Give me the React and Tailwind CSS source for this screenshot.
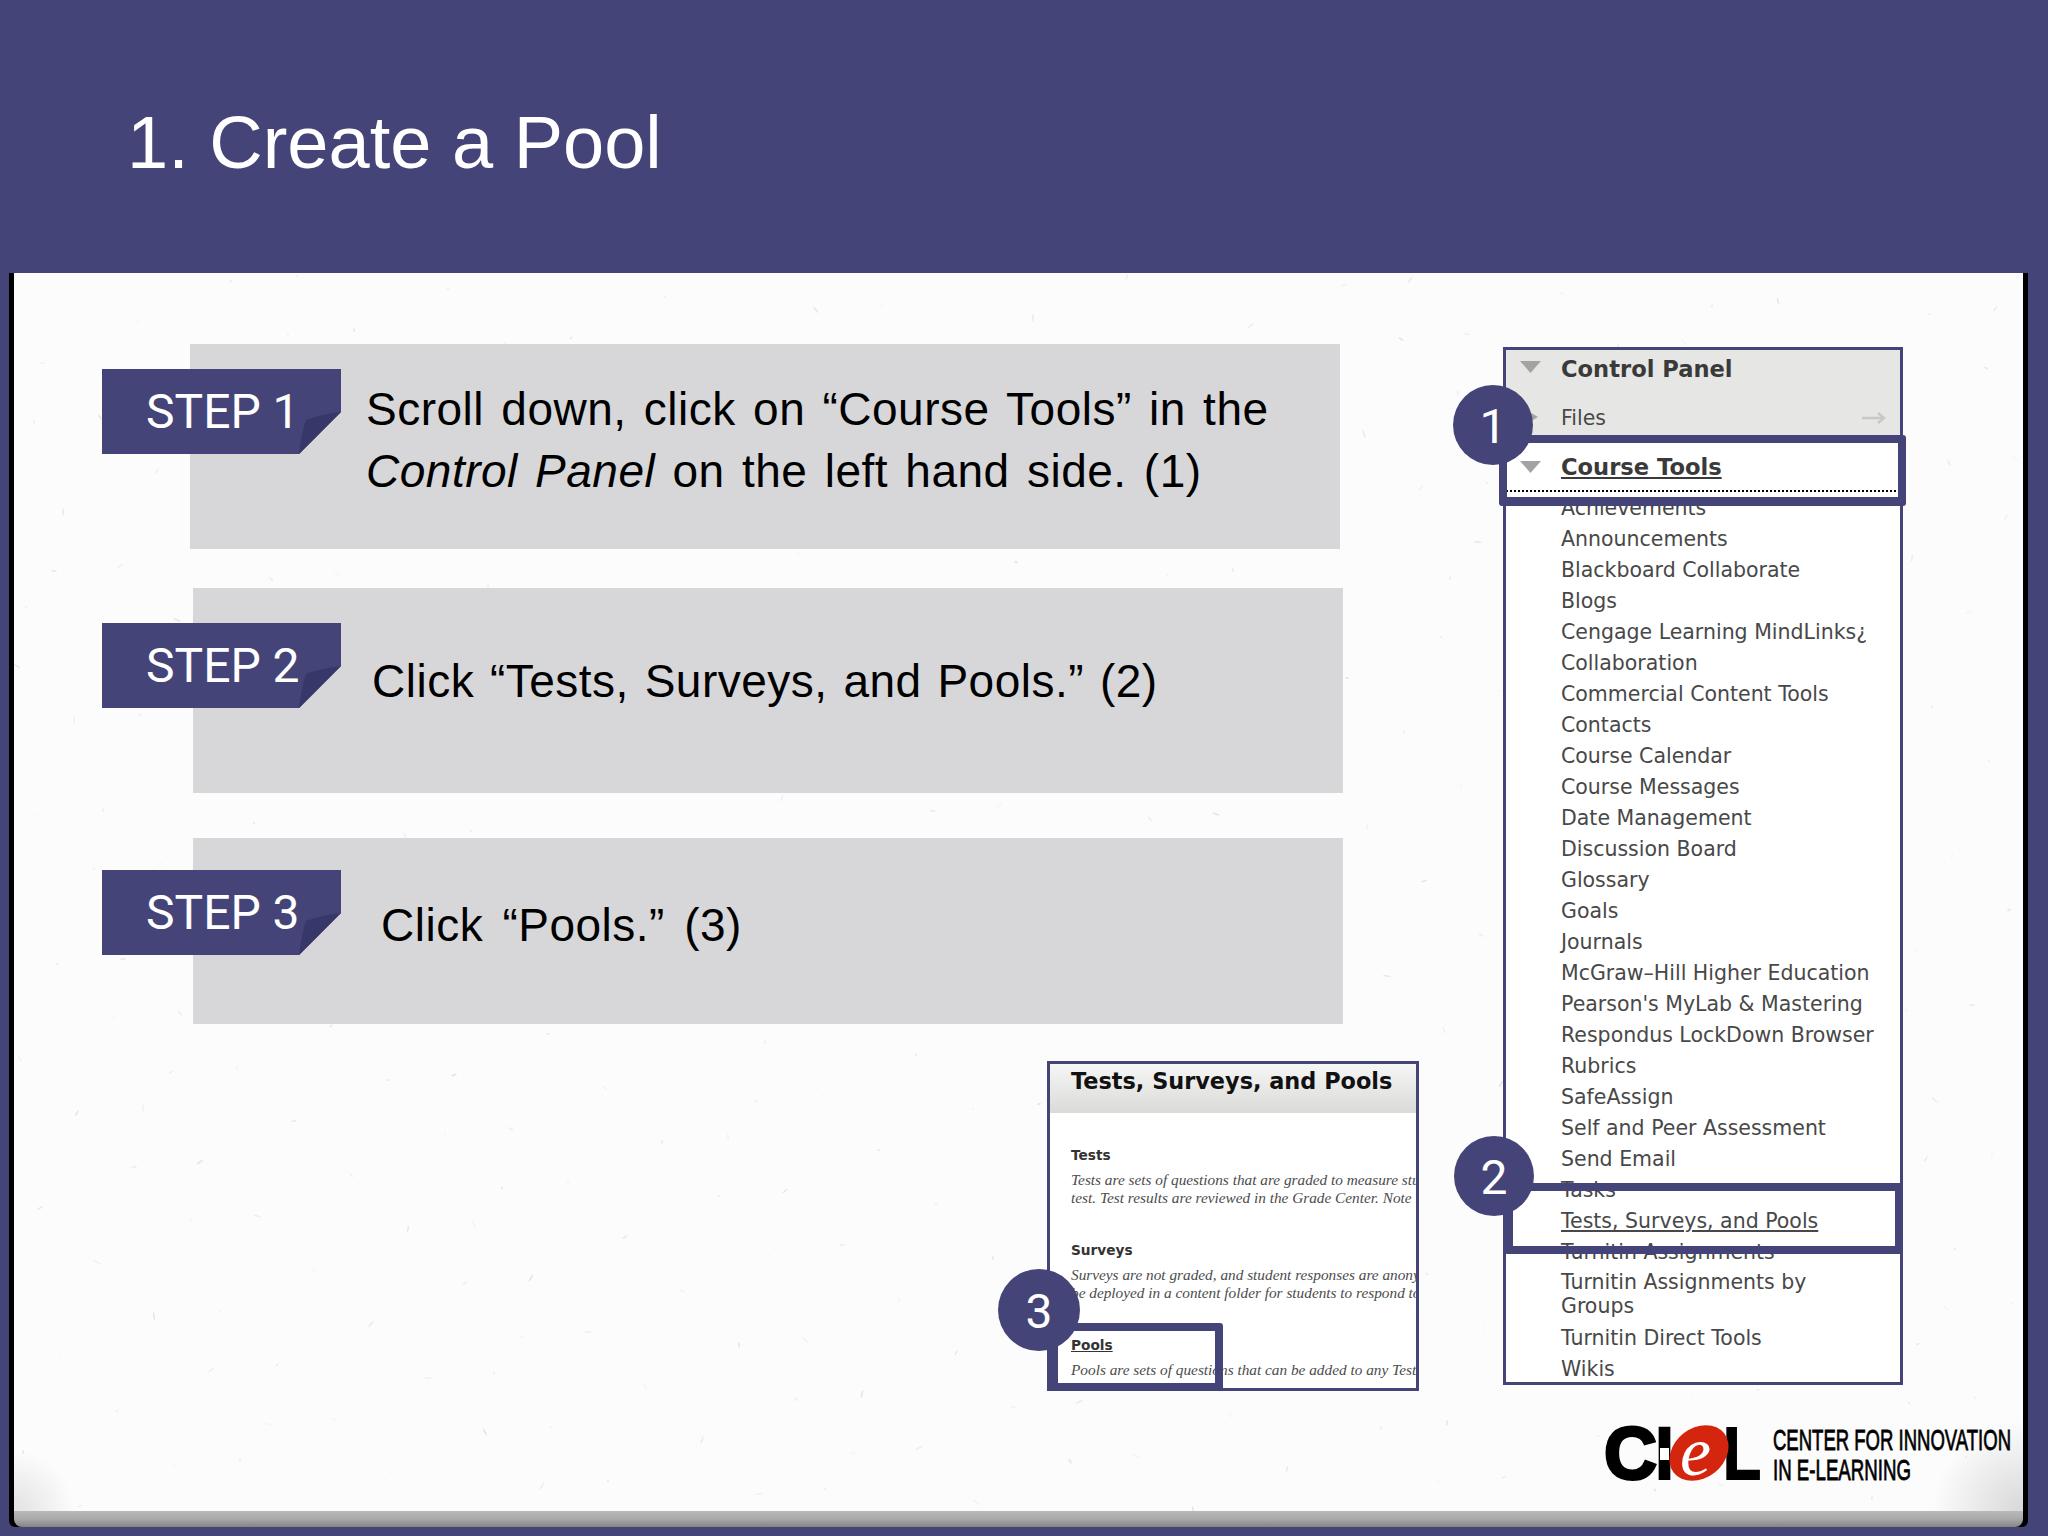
const tools = [
  "Achievements",
  "Announcements",
  "Blackboard Collaborate",
  "Blogs",
  "Cengage Learning MindLinks¿",
  "Collaboration",
  "Commercial Content Tools",
  "Contacts",
  "Course Calendar",
  "Course Messages",
  "Date Management",
  "Discussion Board",
  "Glossary",
  "Goals",
  "Journals",
  "McGraw–Hill Higher Education",
  "Pearson's MyLab & Mastering",
  "Respondus LockDown Browser",
  "Rubrics",
  "SafeAssign",
  "Self and Peer Assessment",
  "Send Email",
  "Tasks",
];

const specks = Array.from({ length: 420 }, (_, i) => {
  const a = (i * 7919) % 2009;
  const b = (i * 104729) % 1238;
  return { x: a, y: b, r: (i * 37) % 180, w: 1 + (i % 4), o: 0.04 + ((i % 5) * 0.025) };
});

const Paper = () => (
  <svg className="absolute inset-0 w-full h-full pointer-events-none" viewBox="0 0 2009 1238">
    {specks.map((s, i) => (
      <ellipse
        key={i}
        cx={s.x}
        cy={s.y}
        rx={s.w}
        ry="0.8"
        fill="#555"
        opacity={s.o}
        transform={`rotate(${s.r} ${s.x} ${s.y})`}
      />
    ))}
  </svg>
);

const Badge = ({ top, children }) => (
  <div className={`absolute left-[-88px] w-[239px] h-[85px] ${top}`}>
    <div className="w-full h-full bg-[#454478] [clip-path:polygon(0_0,100%_0,100%_50.5%,82.5%_100%,0_100%)] pl-[44px] text-white text-[48px] leading-[85px] tracking-normal [word-spacing:0] font-['Roboto',sans-serif] font-normal">
      {children}
    </div>
    <svg className="absolute left-0 top-0" width="239" height="85" viewBox="0 0 239 85">
      <path d="M197 85 Q200 62 204 51 Q220 45 239 43 Z" fill="#37376a" />
    </svg>
  </div>
);

const Circle = ({ pos, children }) => (
  <div className={`absolute rounded-full bg-[#454478] text-white text-[48px] font-['Roboto',sans-serif] font-normal pt-[4px] flex items-center justify-center ${pos}`}>
    {children}
  </div>
);

const Section = ({ title, link, lines }) => (
  <div className="pl-[21px] pt-[33px] h-[95px] whitespace-nowrap">
    <div className={`h-[18px] leading-[18px] text-[13.7px] font-bold text-[#333] font-['DejaVu_Sans',sans-serif] ${link ? "underline" : ""}`}>
      {title}
    </div>
    <div className="mt-[7px] text-[15.3px] leading-[18px] italic text-[#4c4c4c] font-['Liberation_Serif',serif]">
      {lines.map((l) => (
        <div key={l}>{l}</div>
      ))}
    </div>
  </div>
);

const Logo = () => (
  <svg width="415" height="66" viewBox="1600 1420 415 66" className="block">
    <text x="1604" y="1479" fontFamily="Liberation Sans" fontWeight="700" fontSize="74" textLength="53" lengthAdjust="spacingAndGlyphs" stroke="#000" strokeWidth="3">C</text>
    <text x="1655" y="1479" fontFamily="Liberation Sans" fontWeight="700" fontSize="74" textLength="19" lengthAdjust="spacingAndGlyphs" stroke="#000" strokeWidth="2">I</text>
    <rect x="1660" y="1448" width="9" height="12" fill="#fff" />
    <text x="1723" y="1479" fontFamily="Liberation Sans" fontWeight="700" fontSize="74" textLength="38" lengthAdjust="spacingAndGlyphs" stroke="#000" strokeWidth="2">L</text>
    <ellipse cx="1699" cy="1453" rx="32" ry="25" fill="#d4260f" transform="rotate(-38 1699 1453)" />
    <text x="1680" y="1475" fontFamily="Liberation Serif" fontStyle="italic" fontSize="70" fill="#fff">e</text>
    <text x="1773" y="1450" fontFamily="Liberation Sans" fontSize="30" textLength="238" lengthAdjust="spacingAndGlyphs" stroke="#000" strokeWidth="0.8">CENTER FOR INNOVATION</text>
    <text x="1773" y="1480" fontFamily="Liberation Sans" fontSize="30" textLength="138" lengthAdjust="spacingAndGlyphs" stroke="#000" strokeWidth="0.8">IN E-LEARNING</text>
  </svg>
);

export default function App() {
  return (
    <div className="w-[2048px] h-[1536px] bg-[#454478] flex flex-col overflow-hidden font-['Liberation_Sans',sans-serif]">
      <header className="h-[273px] shrink-0 pl-[127px] pt-[95px] text-[74px] leading-[96px] text-white">
        1. Create a Pool
      </header>

      <div className="flex-1 ml-[9px] mr-[20px] mb-[9px] bg-black px-[5px] rounded-b-[6px] overflow-hidden flex flex-col">
        <main className="relative flex-1 flex bg-[#fcfcfd] bg-[radial-gradient(circle_at_0%_100%,#e2e2e2,transparent_60px),radial-gradient(circle_at_100%_100%,#d8d8d8,transparent_90px)]">
          <Paper />

          <div className="relative w-[1489px] shrink-0 pt-[71px] text-[46px] text-black tracking-[0.5px] [word-spacing:4px]">
            <div className="relative ml-[176px] w-[1150px] h-[205px] bg-[#d7d7d9] pl-[176px] pt-[34px] leading-[62px]">
              <Badge top="top-[25px]">STEP 1</Badge>
              <div>Scroll down, click on “Course Tools” in the</div>
              <div>
                <i>Control Panel</i> on the left hand side. (1)
              </div>
            </div>

            <div className="relative ml-[179px] mt-[39px] w-[1150px] h-[205px] bg-[#d7d7d9] pl-[179px] pt-[62px] leading-[62px] [word-spacing:2.5px]">
              <Badge top="top-[35px] left-[-91px]">STEP 2</Badge>
              Click “Tests, Surveys, and Pools.” (2)
            </div>

            <div className="relative ml-[179px] mt-[45px] w-[1150px] h-[186px] bg-[#d7d7d9] pl-[188px] pt-[56px] leading-[62px] [word-spacing:6px]">
              <Badge top="top-[32px] left-[-91px]">STEP 3</Badge>
              Click “Pools.” (3)
            </div>

            <div className="relative ml-[1033px] mt-[37px] w-[372px] h-[330px] border-[3px] border-[#454478] bg-white tracking-normal [word-spacing:0]">
              <div className="w-full h-full overflow-hidden">
                <div className="h-[49px] pl-[21px] bg-linear-to-b from-[#f6f6f5] to-[#dadad8] text-[22.4px] leading-[34px] font-bold text-[#111] font-['DejaVu_Sans',sans-serif]">
                  Tests, Surveys, and Pools
                </div>
                <Section
                  title="Tests"
                  lines={[
                    "Tests are sets of questions that are graded to measure students",
                    "test. Test results are reviewed in the Grade Center. Note that",
                  ]}
                />
                <Section
                  title="Surveys"
                  lines={[
                    "Surveys are not graded, and student responses are anonymous",
                    "be deployed in a content folder for students to respond to",
                  ]}
                />
                <Section link title="Pools" lines={["Pools are sets of questions that can be added to any Test"]} />
              </div>
              <div className="absolute left-[-3px] top-[259px] w-[176px] h-[68px] border-[8px] border-l-[11px] border-[#454478] rounded-[3px]" />
              <Circle pos="left-[-52px] top-[205px] w-[82px] h-[82px]">3</Circle>
            </div>
          </div>

          <div className="relative pt-[74px]">
            <div className="relative w-[400px] h-[1038px] border-[3px] border-[#454478] bg-white font-['DejaVu_Sans',sans-serif] text-[20.5px] text-[#484848]">
              <div className="h-[85px] bg-[#e6e7e5] pl-[55px]">
                <div className="h-[38px] leading-[38px] text-[22.6px] font-bold text-[#3a3a3a]">Control Panel</div>
                <div className="mt-[12px] h-[35px] leading-[37px] flex">
                  <span>Files</span>
                  <svg className="ml-auto mr-[14px] mt-[11px]" width="24" height="14" viewBox="0 0 24 14">
                    <path d="M0 7H22M16 2L22 7L16 12" fill="none" stroke="#c8c8c6" strokeWidth="2.5" />
                  </svg>
                </div>
                <svg className="absolute left-[14px] top-[11px]" width="21" height="12" viewBox="0 0 21 12">
                  <path d="M0 0H21L10.5 12Z" fill="#a3a3a3" />
                </svg>
                <svg className="absolute left-[22px] top-[61px]" width="10" height="12" viewBox="0 0 10 12">
                  <path d="M0 0L10 6L0 12Z" fill="#a3a3a3" />
                </svg>
              </div>

              <div className="relative h-[57px] border-b-2 border-dotted border-black pl-[55px] pt-[13px] leading-[38px] text-[22.6px] font-bold text-[#3a3a3a]">
                <span className="underline">Course Tools</span>
                <svg className="absolute left-[14px] top-[26px]" width="21" height="12" viewBox="0 0 21 12">
                  <path d="M0 0H21L10.5 12Z" fill="#a3a3a3" />
                </svg>
              </div>

              <ul className="pl-[55px] whitespace-nowrap">
                {tools.map((t) => (
                  <li key={t} className="h-[31px] leading-[32px]">
                    {t}
                  </li>
                ))}
                <li className="h-[31px] leading-[32px] underline">Tests, Surveys, and Pools</li>
                <li className="h-[31px] leading-[32px]">Turnitin Assignments</li>
                <li className="pt-[4px] pb-[4px] w-[310px] whitespace-normal leading-[23.5px]">Turnitin Assignments by Groups</li>
                <li className="h-[31px] leading-[32px]">Turnitin Direct Tools</li>
                <li className="h-[31px] leading-[32px]">Wikis</li>
              </ul>

              <div className="absolute left-[-7px] top-[85px] w-[407px] h-[71px] border-[8px] border-b-[9px] border-[#454478] rounded-[3px]" />
              <div className="absolute left-[-1px] top-[833px] w-[398px] h-[71px] border-[8px] border-[#454478] rounded-[2px]" />
              <Circle pos="left-[-53px] top-[35px] w-[80px] h-[80px]">1</Circle>
              <Circle pos="left-[-52px] top-[786px] w-[80px] h-[80px]">2</Circle>
            </div>
            <div className="mt-[35px] ml-[97px]">
              <Logo />
            </div>
          </div>
        </main>
        <div className="h-[16px] shrink-0 bg-linear-to-b from-[#b9b9b9] via-[#a9a9a9] to-[#858585] rounded-b-[8px]" />
      </div>
    </div>
  );
}
